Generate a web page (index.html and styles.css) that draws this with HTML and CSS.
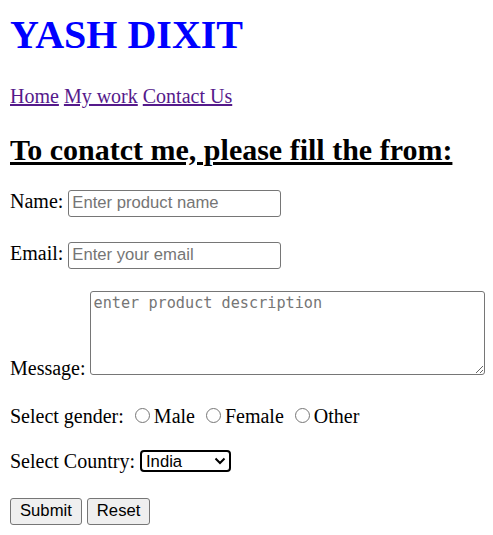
FILE: index.html
```html
<!DOCTYPE html>
<html>
<head>
<meta charset="utf-8">
<title>Contact</title>
<link rel="stylesheet" href="styles.css">
</head>
<body>
<h1 class="title">YASH DIXIT</h1>
<nav class="nav"><a href="#home">Home</a> <a href="#work">My work</a> <a href="#contact">Contact Us</a></nav>
<h2 class="heading">To conatct me, please fill the from:</h2>
<form class="form">
<p class="row">Name: <input class="field" type="text" placeholder="Enter product name"></p>
<p class="row">Email: <input class="field" type="email" placeholder="Enter your email"></p>
<p class="row row-nowrap">Message: <textarea class="area" placeholder="enter product description"></textarea></p>
<p class="row row-gender">Select gender: <input class="radio" type="radio" name="g"><label>Male</label> <input class="radio" type="radio" name="g"><label>Female</label> <input class="radio" type="radio" name="g"><label>Other</label></p>
<p class="row">Select Country: <span class="selwrap"><select class="sel"><option>India</option><option>USA</option></select><svg class="chev" width="12" height="8" viewBox="0 0 12 8"><path d="M1.5 1.5 L6 6 L10.5 1.5" fill="none" stroke="#000" stroke-width="2"/></svg></span></p>
<p class="row row-last"><button class="btn" type="submit">Submit</button> <button class="btn" type="reset">Reset</button></p>
</form>
</body>
</html>
```
FILE: styles.css
```css
html {
  overflow: hidden;
}
body {
  margin: 10px 0 0 10px;
  font-family: "Liberation Serif", "Times New Roman", serif;
  font-size: 20px;
  color: #000;
  background: #fff;
}
.title {
  color: #0000ff;
  font-size: 40px;
  margin: 1px 0 26.8px;
}
.nav {
  margin: 20px 0;
}
.nav a {
  color: #551a8b;
}
.heading {
  font-size: 30px;
  text-decoration: underline;
  margin: 24.9px 0 20.4px;
}
.row {
  margin: 20px 0;
}
.row-nowrap {
  white-space: nowrap;
}
.row-gender {
  margin-top: 24px;
}
.row-last {
  margin-bottom: 0;
}
.field {
  box-sizing: border-box;
  font-family: "Liberation Sans", Arial, sans-serif;
  font-size: 16.67px;
  width: 213px;
  height: 27px;
  padding: 1px 3px;
  margin: 2.5px 0;
  border: 1px solid #767676;
  border-radius: 3px;
  color: #000;
}
.field::placeholder {
  color: #757575;
}
.area {
  box-sizing: border-box;
  font-family: "DejaVu Sans Mono", "Liberation Mono", monospace;
  font-size: 15.2px;
  width: 395px;
  height: 84px;
  padding: 2px 3px;
  margin: 0 0 0 -1px;
  border: 1px solid #767676;
  border-radius: 3px;
  vertical-align: baseline;
  white-space: pre-wrap;
}
.area::placeholder {
  color: #757575;
}
.radio {
  width: 15px;
  height: 15px;
  margin: 3.75px 3.75px 0 6.25px;
}
.selwrap {
  position: relative;
  display: inline-block;
  margin: 2px 0;
}
.sel {
  box-sizing: border-box;
  -webkit-appearance: none;
  appearance: none;
  font-family: "Liberation Sans", Arial, sans-serif;
  font-size: 16.67px;
  width: 91px;
  height: 22px;
  padding: 0 0 0 4px;
  margin: 0;
  border: 2px solid #000;
  border-radius: 4px;
  background: #fff;
  color: #000;
  vertical-align: top;
}
.chev {
  position: absolute;
  right: 5px;
  top: 7px;
  pointer-events: none;
}
.btn {
  box-sizing: border-box;
  font-family: "Liberation Sans", Arial, sans-serif;
  font-size: 16.67px;
  height: 27px;
  padding: 1px 9px;
  margin: 3px 0 0;
  border: 1px solid #767676;
  border-radius: 3px;
  background: #efefef;
  color: #000;
}
```
